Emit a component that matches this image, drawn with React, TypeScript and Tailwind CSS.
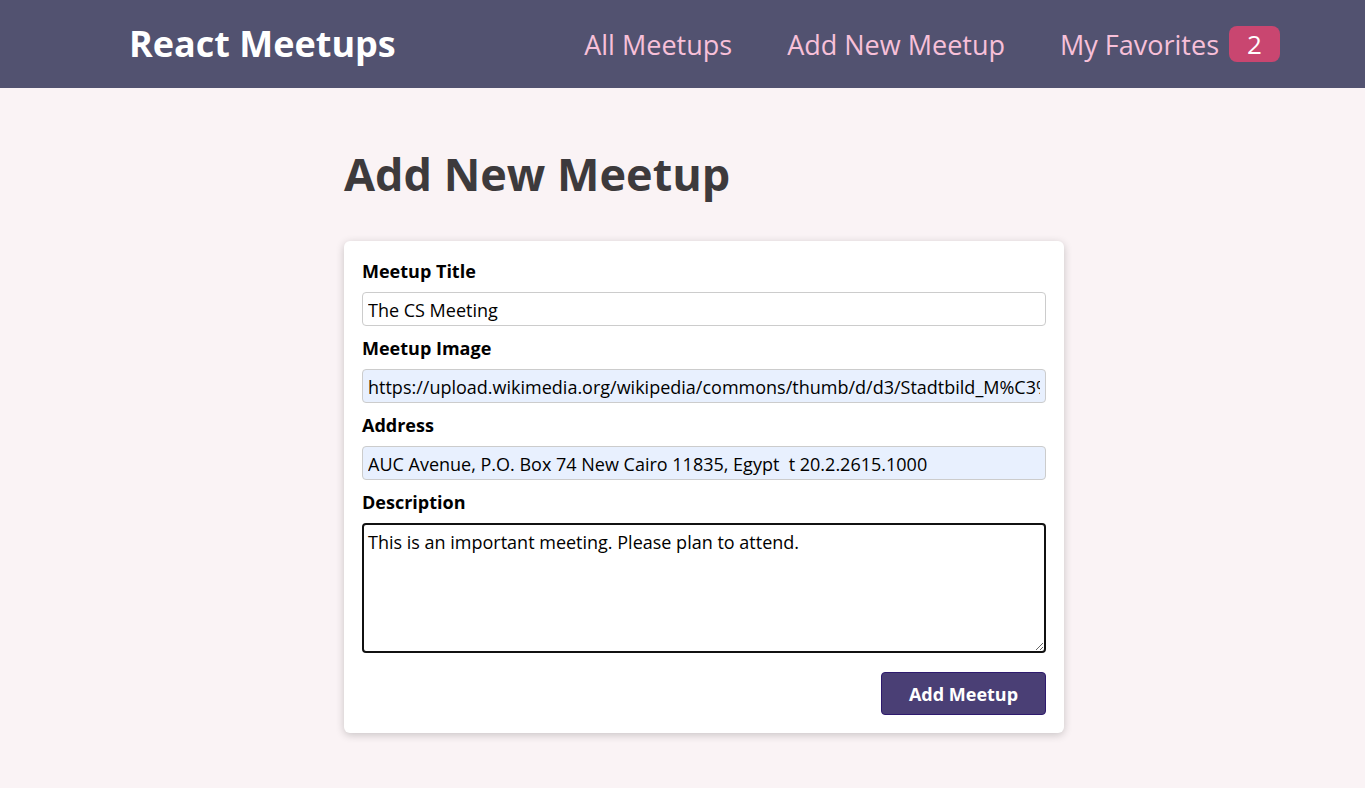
import React from "react";

export default function App() {
  return (
    <div className="min-h-[788px] bg-[#faf3f5] font-['Open_Sans',sans-serif]">
      <header className="h-[88px] bg-[#525270] flex items-center justify-between pl-[129px] pr-[85px]">
        <div className="text-[36px] font-bold text-white leading-none">React Meetups</div>
        <nav>
          <ul className="flex items-center gap-[55px]">
            <li className="text-[27px] text-[#f8c0d9] leading-none">All Meetups</li>
            <li className="text-[27px] text-[#f8c0d9] leading-none">Add New Meetup</li>
            <li className="flex items-center text-[27px] text-[#f8c0d9] leading-none">
              My Favorites
              <span className="ml-[10px] w-[51px] h-[36px] rounded-[8px] bg-[#c94670] text-white flex items-center justify-center text-[26px]">
                2
              </span>
            </li>
          </ul>
        </nav>
      </header>
      <main className="ml-[344px] w-[720px] pt-[58px]">
        <h1 className="text-[45px] font-bold text-[#3d3a3c] leading-[56px]">Add New Meetup</h1>
        <div className="mt-[39px] bg-white rounded-[6px] shadow-[0_2px_8px_rgba(0,0,0,0.2)] p-[18px]">
          <div className="mb-[10px]">
            <label className="block font-bold text-[18px] leading-[24px] mb-[9px] text-black">Meetup Title</label>
            <input
              className="block w-full h-[34px] border border-[#ccc] rounded-[4px] px-[5px] pt-[1px] text-[18px] text-black bg-white outline-none"
              defaultValue="The CS Meeting"
            />
          </div>
          <div className="mb-[10px]">
            <label className="block font-bold text-[18px] leading-[24px] mb-[9px] text-black">Meetup Image</label>
            <input
              className="block w-full h-[34px] border border-[#ccc] rounded-[4px] px-[5px] pt-[1px] text-[18px] text-black bg-[#e8f0fe] outline-none"
              defaultValue="https://upload.wikimedia.org/wikipedia/commons/thumb/d/d3/Stadtbild_M%C3%BCnchen.jpg"
            />
          </div>
          <div className="mb-[10px]">
            <label className="block font-bold text-[18px] leading-[24px] mb-[9px] text-black">Address</label>
            <input
              className="block w-full h-[34px] border border-[#ccc] rounded-[4px] px-[5px] pt-[1px] text-[18px] text-black bg-[#e8f0fe] outline-none"
              defaultValue="AUC Avenue, P.O. Box 74 New Cairo 11835, Egypt  t 20.2.2615.1000"
            />
          </div>
          <div>
            <label className="block font-bold text-[18px] leading-[24px] mb-[9px] text-black">Description</label>
            <textarea
              className="block w-full h-[130px] border-2 border-[#111] rounded-[4px] px-[4px] pt-[5px] text-[18px] leading-[24px] text-black bg-white outline-none"
              defaultValue="This is an important meeting. Please plan to attend."
            />
          </div>
          <div className="flex justify-end mt-[19px]">
            <button className="w-[165px] h-[43px] rounded-[4px] bg-[#4a3f75] border border-[#2e1a6e] text-white font-bold text-[18px] pt-[1px]">
              Add Meetup
            </button>
          </div>
        </div>
      </main>
    </div>
  );
}
